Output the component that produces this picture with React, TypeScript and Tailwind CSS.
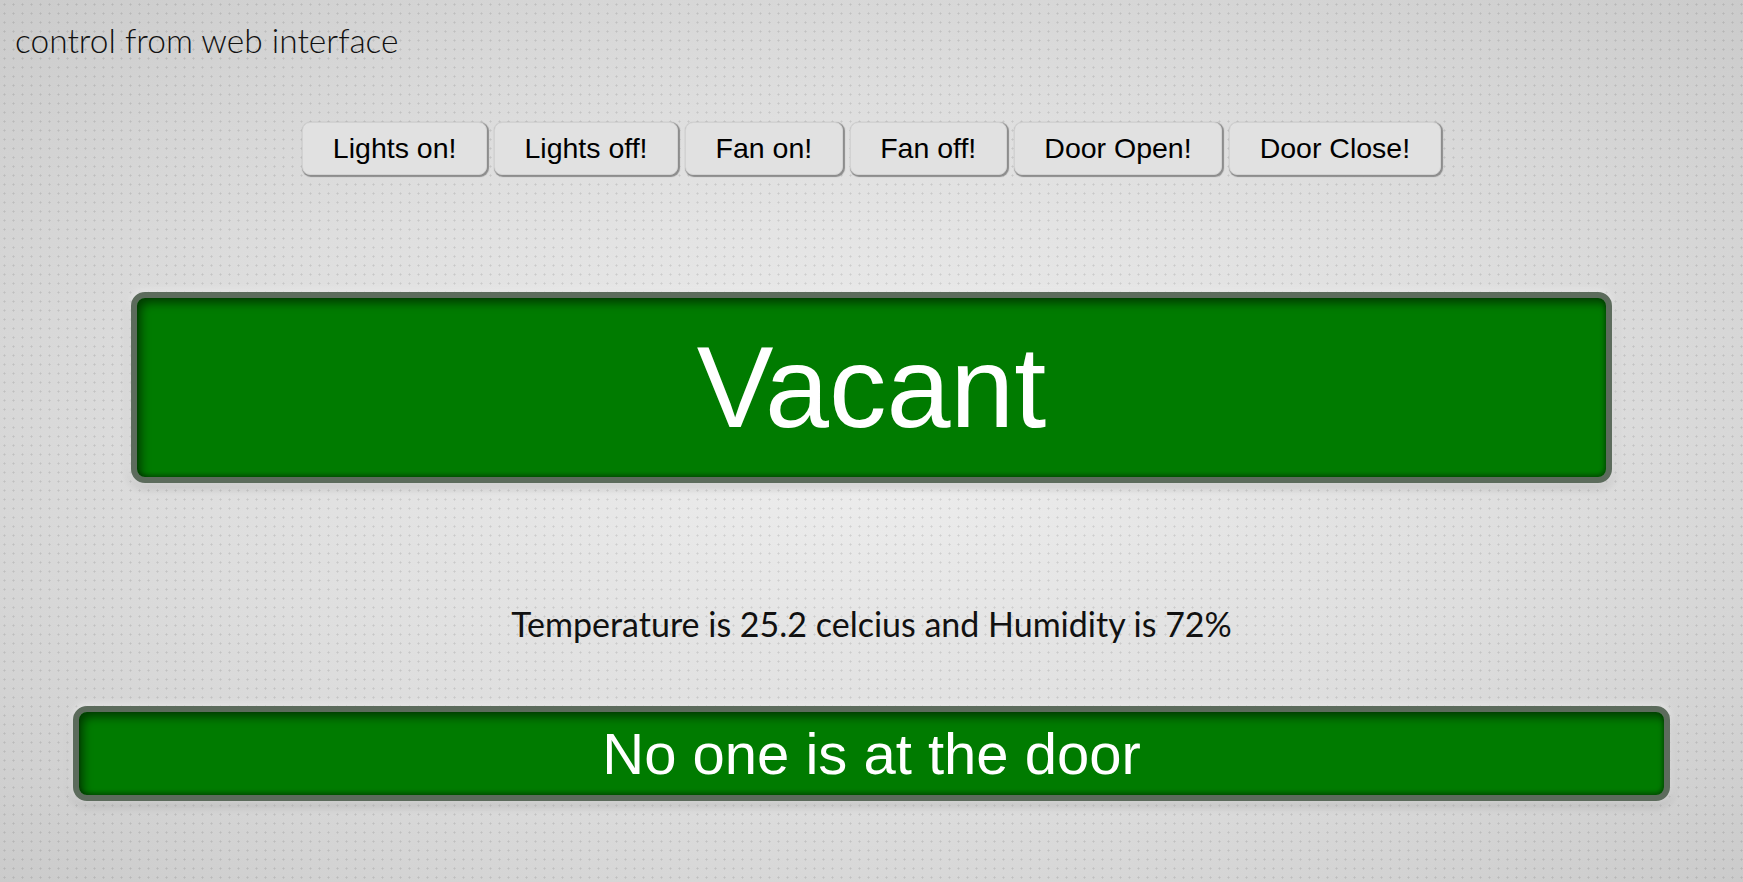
const buttons = ["Lights on!", "Lights off!", "Fan on!", "Fan off!", "Door Open!", "Door Close!"];

function StatusPanel({ text, className }: { text: string; className: string }) {
  return (
    <div
      className={`mx-auto flex items-center justify-center rounded-[14px] border-[6px] border-[#5c6b5c] bg-[#007b00] font-['Liberation_Sans',Arial,sans-serif] text-white shadow-[inset_4px_5px_10px_rgba(0,0,0,0.5),inset_-1px_-2px_4px_rgba(0,0,0,0.35),0_0_6px_3px_rgba(255,255,255,0.55),0_3px_10px_rgba(0,0,0,0.3)] ${className}`}
    >
      {text}
    </div>
  );
}

export default function App() {
  return (
    <div className="min-h-screen w-full [background-image:radial-gradient(circle,rgba(0,0,0,0.11)_0.8px,transparent_1.3px),radial-gradient(ellipse_at_center,#eeeeee_0%,#dedede_55%,#cbcbcb_100%)] [background-size:9px_9px,100%_100%] pb-10">
      <div className="pl-[15px] pt-[20px] font-['Lato',sans-serif] text-[33.5px] font-light leading-[40px] text-[#111]">
        control from web interface
      </div>

      <div className="mt-[62px] flex justify-center gap-[7px]">
        {buttons.map((b) => (
          <button
            key={b}
            className="h-[53px] rounded-[8px] border border-[#d2d2d2] bg-[#e1e1e1] px-[29.5px] font-['Liberation_Sans',Arial,sans-serif] text-[28.5px] text-black shadow-[1px_1px_1px_1px_#8c8c8c]"
          >
            {b}
          </button>
        ))}
      </div>

      <StatusPanel text="Vacant" className="mt-[117px] h-[191px] w-[1481px] text-[115px]" />

      <div className="mt-[121px] text-center font-['Lato',sans-serif] text-[34px] leading-[40px] text-[#111]">
        Temperature is 25.2 celcius and Humidity is 72%
      </div>

      <StatusPanel text="No one is at the door" className="mt-[62px] h-[95px] w-[1597px] text-[58px]" />
    </div>
  );
}
